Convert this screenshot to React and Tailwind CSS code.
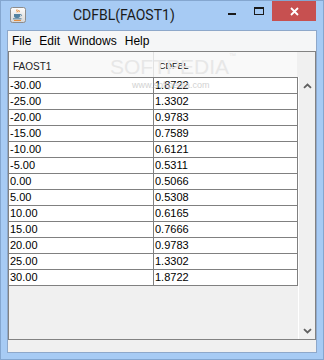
import React from 'react';

const ROWS = [
  ['-30.00', '1.8722'],
  ['-25.00', '1.3302'],
  ['-20.00', '0.9783'],
  ['-15.00', '0.7589'],
  ['-10.00', '0.6121'],
  ['-5.00', '0.5311'],
  ['0.00', '0.5066'],
  ['5.00', '0.5308'],
  ['10.00', '0.6165'],
  ['15.00', '0.7666'],
  ['20.00', '0.9783'],
  ['25.00', '1.3302'],
  ['30.00', '1.8722'],
];

function JavaIcon() {
  return (
    <svg width="16" height="16" viewBox="0 0 16 16" className="shrink-0">
      <defs>
        <linearGradient id="jg" x1="0" y1="0" x2="0" y2="1">
          <stop offset="0" stopColor="#fdfdfd" />
          <stop offset="1" stopColor="#d6d6d6" />
        </linearGradient>
      </defs>
      <rect x="0.5" y="0.5" width="15" height="15" rx="2" fill="url(#jg)" stroke="#8c8c8c" />
      <path d="M7 2.5c-1 1 1 1.6 0 2.8M9 3c-.8.8.8 1.2 0 2.2" stroke="#e76f00" strokeWidth="1" fill="none" />
      <path d="M4 7h6v2.2c0 1.2-1 1.8-3 1.8s-3-.6-3-1.8z" fill="#5382a1" />
      <path d="M10 7.6h1c.8 0 .8 1.6-.4 1.6" stroke="#5382a1" strokeWidth="0.9" fill="none" />
      <path d="M3 11.8h8.5" stroke="#5382a1" strokeWidth="1" />
      <path d="M4 13.4h7" stroke="#e76f00" strokeWidth="0.8" />
    </svg>
  );
}

function Chevron({ down }) {
  return (
    <svg width="9" height="6" viewBox="0 0 9 6">
      <path
        d={down ? 'M1 1.2l3.5 3.3 3.5-3.3' : 'M1 4.8l3.5-3.3 3.5 3.3'}
        stroke="#606060"
        strokeWidth="1.8"
        fill="none"
      />
    </svg>
  );
}

export default function App() {
  return (
    <div
      className="w-[324px] h-[360px] bg-[#a7cbf4] border border-[#84a6cf] flex flex-col overflow-hidden"
      style={{ fontFamily: '"Liberation Sans", Arial, sans-serif' }}
    >
      {/* title bar */}
      <div className="h-[29px] flex items-start shrink-0">
        <div className="ml-[9px] mt-[6px]">
          <JavaIcon />
        </div>
        <div
          className="ml-[47px] h-full flex items-center text-[14px] text-[#1a1a1a]"
          style={{ fontFamily: 'Roboto, "Liberation Sans", sans-serif' }}
        >
          CDFBL(FAOST1)
        </div>
        <div className="ml-auto flex items-start">
          <div className="mt-[12px] w-[8px] h-[2px] bg-[#1a1a1a]" />
          <div className="ml-[18px] mt-[6px] w-[10px] h-[8px] border border-t-2 border-[#1a1a1a]" />
          <div className="ml-[8px] mr-[7px] w-[44px] h-[20px] bg-[#c75050] flex items-center justify-center">
            <svg width="9" height="9" viewBox="0 0 9 9">
              <path d="M1 1l7 7M8 1l-7 7" stroke="#fff" strokeWidth="1.8" />
            </svg>
          </div>
        </div>
      </div>

      {/* frame content */}
      <div className="mx-[6px] mb-[6px] h-[323px] border border-[#8ea8ca] bg-[#f0f0f0] flex flex-col">
        <div className="h-[20px] bg-[#f5f6f7] flex items-center text-[12px] text-black">
          <span className="px-[4px]">File</span>
          <span className="px-[4px]">Edit</span>
          <span className="px-[4px]">Windows</span>
          <span className="px-[4px]">Help</span>
        </div>

        <div className="relative h-[289px] border border-[#828282] flex">
          <div className="w-[289px] flex flex-col">
            <div className="h-[25px] w-[288px] bg-[#f9f9f9] flex text-[#222]">
              <div className="w-[145px] border-r border-[#e2e2e2] pl-[4px] pt-[4px] flex items-center text-[10px]">
                FAOST1
              </div>
              <div className="flex-1 pl-[5px] pt-[4px] flex items-center text-[9px] text-[#111]">CDFBL</div>
            </div>
            <div className="border-t border-[#808080] text-[11px] text-black bg-white">
              {ROWS.map(([a, b], i) => (
                <div key={i} className="h-[16px] flex border-b border-r border-[#808080]">
                  <div className="w-[145px] border-r border-[#808080] pl-px flex items-center">{a}</div>
                  <div className="flex-1 pl-px flex items-center">{b}</div>
                </div>
              ))}
            </div>
            <div className="flex-1 bg-[#f0f0f0]" />
          </div>

          <div className="flex-1 flex flex-col bg-[#f0f0f0]">
            <div className="h-[25px]" />
            <div className="flex-1 flex flex-col border-l border-white">
              <div className="h-[18px] flex items-center justify-center">
                <Chevron />
              </div>
              <div className="flex-1" />
              <div className="h-[17px] flex items-center justify-center">
                <Chevron down />
              </div>
            </div>
          </div>

          {/* watermark */}
          <div className="pointer-events-none absolute left-[101px] top-[-1px] text-[21px] text-[#e7e7e7] font-light">
            SOFTPEDIA<span className="text-[7px] align-top">™</span>
          </div>
          <div className="pointer-events-none absolute left-[123px] top-[27px] text-[9px] text-[#d2d2d2]">
            www.softpedia.com
          </div>
        </div>

        <div className="h-[12px]" />
      </div>
    </div>
  );
}
